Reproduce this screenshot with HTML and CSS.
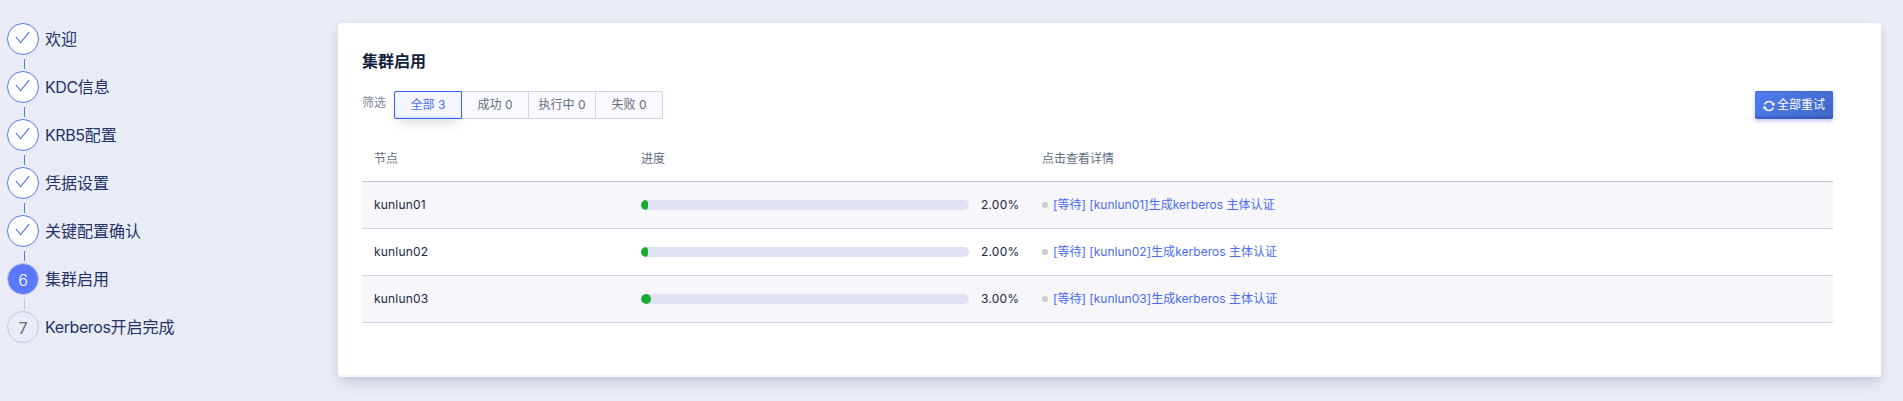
FILE: index.html
```
<!DOCTYPE html>
<html lang="zh-CN">
<head>
<meta charset="utf-8">
<title>集群启用</title>
<link rel="stylesheet" href="styles.css">
</head>
<body>
<div class="page">
  <ol class="steps">
    <li class="step done"><span class="mark"><svg class="check" viewBox="0 0 16 14"><path d="M1 6.2 L5.6 11.6 L14.2 1.2"/></svg></span><span class="label">欢迎</span></li>
    <li class="step done"><span class="mark"><svg class="check" viewBox="0 0 16 14"><path d="M1 6.2 L5.6 11.6 L14.2 1.2"/></svg></span><span class="label"><span class="latin">KDC</span>信息</span></li>
    <li class="step done"><span class="mark"><svg class="check" viewBox="0 0 16 14"><path d="M1 6.2 L5.6 11.6 L14.2 1.2"/></svg></span><span class="label"><span class="latin">KRB5</span>配置</span></li>
    <li class="step done"><span class="mark"><svg class="check" viewBox="0 0 16 14"><path d="M1 6.2 L5.6 11.6 L14.2 1.2"/></svg></span><span class="label">凭据设置</span></li>
    <li class="step done"><span class="mark"><svg class="check" viewBox="0 0 16 14"><path d="M1 6.2 L5.6 11.6 L14.2 1.2"/></svg></span><span class="label">关键配置确认</span></li>
    <li class="step current"><span class="mark">6</span><span class="label">集群启用</span></li>
    <li class="step"><span class="mark">7</span><span class="label"><span class="latin">Kerberos</span>开启完成</span></li>
  </ol>
  <main class="card">
    <h1 class="title">集群启用</h1>
    <div class="toolbar">
      <span class="filter-label">筛选</span>
      <div class="filters">
        <button class="filter active">全部 3</button>
        <button class="filter">成功 0</button>
        <button class="filter">执行中 0</button>
        <button class="filter">失败 0</button>
      </div>
      <button class="retry"><svg class="sync" viewBox="0 0 12 12"><path class="arc" d="M1.6 4.6 A4.7 4.7 0 0 1 10.2 4.1 M10.4 7.4 A4.7 4.7 0 0 1 1.8 7.9"/><path class="tip" d="M8.2 4.4 L12 3.1 L11.2 6.3 Z M3.8 7.6 L0 8.9 L.8 5.7 Z"/></svg><span>全部重试</span></button>
    </div>
    <div class="table">
      <div class="row head"><span>节点</span><span>进度</span><span>点击查看详情</span></div>
      <div class="row odd"><span>kunlun01</span><div class="progress"><div class="track"><div class="fill" style="width:2%"></div></div><span>2.00%</span></div><a class="detail"><i class="dot"></i>[等待] [kunlun01]生成kerberos 主体认证</a></div>
      <div class="row"><span>kunlun02</span><div class="progress"><div class="track"><div class="fill" style="width:2%"></div></div><span>2.00%</span></div><a class="detail"><i class="dot"></i>[等待] [kunlun02]生成kerberos 主体认证</a></div>
      <div class="row odd"><span>kunlun03</span><div class="progress"><div class="track"><div class="fill" style="width:3%"></div></div><span>3.00%</span></div><a class="detail"><i class="dot"></i>[等待] [kunlun03]生成kerberos 主体认证</a></div>
    </div>
  </main>
</div>
</body>
</html>
```
FILE: styles.css
```
* { box-sizing: border-box; }
body {
  margin: 0;
  background: #e9ecf5;
  color: #1e2743;
  font: 12px/18px Inter, "Noto Sans CJK SC", sans-serif;
}
button { font: inherit; margin: 0; }
.page {
  display: flex;
  height: 401px;
  padding: 23px 22px 24px 7px;
  overflow: hidden;
}
.steps {
  width: 331px;
  flex: none;
  margin: 0;
  padding: 0;
  list-style: none;
}
.step {
  display: grid;
  grid-template: 32px 16px / 32px 1fr;
  column-gap: 6px;
  align-items: center;
  color: #25326a;
  font-size: 16px;
}
.step::after {
  content: "";
  width: 1px;
  height: 10px;
  margin-left: 17px;
  margin-top: 2px;
  background: #c3c8dc;
}
.step.done::after { background: #5577f8; }
.step:last-child::after { display: none; }
.mark {
  display: flex;
  align-items: center;
  justify-content: center;
  width: 32px;
  height: 32px;
  padding-top: 2px;
  border: 1px solid #c3c8dc;
  border-radius: 50%;
  color: #5f6b85;
}
.done .mark { background: #fff; border-color: #5577f8; padding: 0; }
.current .mark { background: #5a78ff; color: #fff; font-weight: 300; }
.check {
  width: 16px;
  height: 14px;
  margin-top: -2px;
  fill: none;
  stroke: #5577f8;
  stroke-width: 1.2;
}
.latin { letter-spacing: -.4px; }
.card {
  flex: 1;
  padding: 26px 48px 0 24px;
  border-radius: 4px;
  background: #fff;
  box-shadow: inset 0 -2px 0 #f5f6fc, 0 7px 14px -3px rgba(40, 48, 70, .2), 0 2px 10px rgba(40, 48, 70, .04);
}
.title {
  margin: 0;
  color: #131f3e;
  font-size: 16px;
  line-height: 24px;
  font-weight: 600;
}
.toolbar {
  display: flex;
  margin-top: 18px;
  height: 28px;
}
.filter-label { width: 32px; line-height: 24px; color: #7c879b; }
.filters { display: flex; }
.filter {
  width: 67px;
  height: 28px;
  padding: 0;
  border: 1px solid #d0d3ea;
  border-left: 0;
  background: #f9f9fd;
  color: #626e84;
  white-space: nowrap;
}
.filter:last-child { border-radius: 0 2px 2px 0; }
.filter.active {
  width: 68px;
  border: 1px solid #3461f5;
  border-radius: 2px 0 0 2px;
  background: #f3f5ff;
  color: #4b6ff0;
  box-shadow: inset 0 -2px 0 #e2e6fa, 0 7px 12px -3px rgba(40, 48, 80, .16);
}
.retry {
  display: flex;
  align-items: center;
  gap: 2px;
  width: 78px;
  height: 28px;
  margin-left: auto;
  padding: 0 0 1px 8px;
  border: 0;
  border-radius: 2px;
  background: linear-gradient(135deg, #4e7cee, #4068c5);
  box-shadow: inset 0 1px 0 #446bd0, inset 0 -3px 0 rgba(35, 60, 145, .3), 0 2px 4px rgba(90, 100, 230, .4);
  color: #fff;
  white-space: nowrap;
}
.sync { width: 12px; height: 12px; margin-top: 3px; flex: none; }
.arc { fill: none; stroke: #fff; stroke-width: 1.4; }
.tip { fill: #fff; }
.table { margin-top: 15px; }
.row {
  display: grid;
  grid-template-columns: 267px 401px 1fr;
  align-items: center;
  height: 47px;
  padding-left: 12px;
  border-bottom: 1px solid #d0d4ea;
  letter-spacing: .2px;
}
.row.head {
  height: 48px;
  padding-top: 2px;
  border-color: #c3c8d9;
  color: #626e84;
  letter-spacing: 0;
}
.row.odd { background: #f6f6fb; }
.progress { display: flex; align-items: center; gap: 12px; }
.track {
  width: 328px;
  height: 10px;
  overflow: hidden;
  border-radius: 5px;
  background: #dfe0f1;
}
.fill { height: 10px; border-radius: 5px; background: #18ac33; }
.detail {
  display: flex;
  align-items: center;
  color: #4a6cf0;
  letter-spacing: .03px;
  white-space: pre;
}
.dot { width: 6px; height: 6px; margin-right: 5px; border-radius: 50%; background: #cbcccf; }
```
